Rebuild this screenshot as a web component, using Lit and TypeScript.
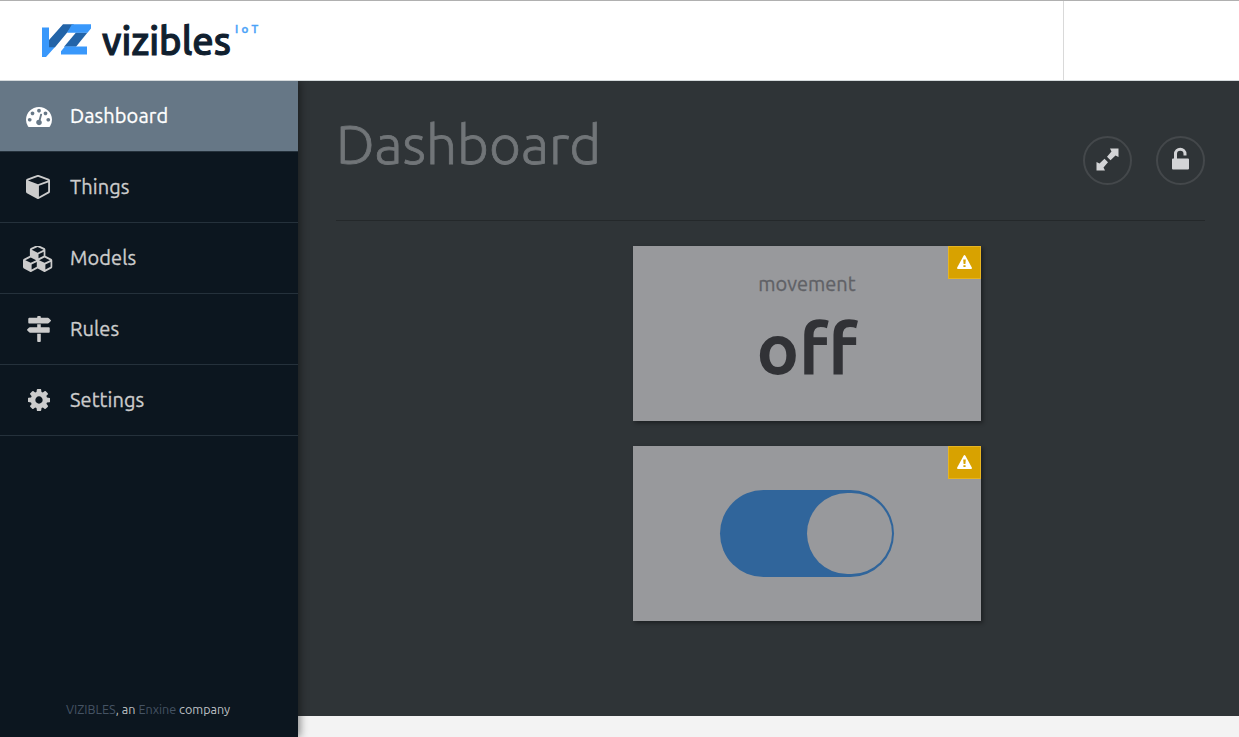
import { LitElement, html, css, svg } from "lit";
import { customElement } from "lit/decorators.js";

const gauge = "M384 1152q0-53-37.5-90.5t-90.5-37.5-90.5 37.5-37.5 90.5 37.5 90.5 90.5 37.5 90.5-37.5 37.5-90.5zm192-448q0-53-37.5-90.5t-90.5-37.5-90.5 37.5-37.5 90.5 37.5 90.5 90.5 37.5 90.5-37.5 37.5-90.5zm428 481l101-382q6-26-7.5-48.5t-38.5-29.5-48 6.5-30 39.5l-101 382q-60 5-107 43.5t-63 98.5q-20 77 20 146t117 89 146-20 89-117q16-60-6-117t-72-91zm660-33q0-53-37.5-90.5t-90.5-37.5-90.5 37.5-37.5 90.5 37.5 90.5 90.5 37.5 90.5-37.5 37.5-90.5zm-640-640q0-53-37.5-90.5t-90.5-37.5-90.5 37.5-37.5 90.5 37.5 90.5 90.5 37.5 90.5-37.5 37.5-90.5zm448 192q0-53-37.5-90.5t-90.5-37.5-90.5 37.5-37.5 90.5 37.5 90.5 90.5 37.5 90.5-37.5 37.5-90.5zm320 448q0 261-141 483-19 29-54 29h-1402q-35 0-54-29-141-221-141-483 0-182 71-348t191-286 286-191 348-71 348 71 286 191 191 286 71 348z";
const cube = "M896 1629l640-349v-636l-640 233v752zm-64-865l698-254-698-254-698 254zm832-252v768q0 35-18 65t-49 47l-704 384q-28 16-61 16t-61-16l-704-384q-31-17-49-47t-18-65v-768q0-40 23-73t61-47l704-256q22-8 44-8t44 8l704 256q38 14 61 47t23 73z";
const cubes = "M640 1632l384-192v-314l-384 164v342zm-64-454l404-173-404-173-404 173zm1088 454l384-192v-314l-384 164v342zm-64-454l404-173-404-173-404 173zm-448-293l384-165v-266l-384 164v267zm-64-379l441-189-441-189-441 189zm1088 518v416q0 36-19 67t-52 47l-448 224q-25 14-57 14t-57-14l-448-224q-4-2-7-4-2 2-7 4l-448 224q-25 14-57 14t-57-14l-448-224q-33-16-52-47t-19-67v-416q0-38 21.5-70t56.5-48l434-186v-400q0-38 21.5-70t56.5-48l448-192q23-10 50-10t50 10l448 192q35 16 56.5 48t21.5 70v400l434 186q36 16 57 48t21 70z";
const signs = "M1745 297q10 10 10 23t-10 23l-141 141q-28 28-68 28h-1344q-26 0-45-19t-19-45v-256q0-26 19-45t45-19h576v-64q0-26 19-45t45-19h128q26 0 45 19t19 45v64h512q40 0 68 28zm-977 919h256v512q0 26-19 45t-45 19h-128q-26 0-45-19t-19-45v-512zm832-448q26 0 45 19t19 45v256q0 26-19 45t-45 19h-1344q-40 0-68-28l-141-141q-10-10-10-23t10-23l141-141q28-28 68-28h512v-192h256v192h576z";
const cog = "M1152 896q0-106-75-181t-181-75-181 75-75 181 75 181 181 75 181-75 75-181zm512-109v222q0 12-8 23t-20 13l-185 28q-19 54-39 91 35 50 107 138 10 12 10 25t-9 23q-27 37-99 108t-94 71q-12 0-26-9l-138-108q-44 23-91 38-16 136-29 186-7 28-36 28h-222q-14 0-24.5-8.5t-11.5-21.5l-28-184q-49-16-90-37l-141 107q-10 9-25 9-14 0-25-11-126-114-165-168-7-10-7-23 0-12 8-23 15-21 51-66.5t54-70.5q-27-50-41-99l-183-27q-13-2-21-12.5t-8-23.5v-222q0-12 8-23t19-13l186-28q14-46 39-92-40-57-107-138-10-12-10-24 0-10 9-23 26-36 98.5-107.5t94.5-71.5q13 0 26 10l138 107q44-23 91-38 16-136 29-186 7-28 36-28h222q14 0 24.5 8.5t11.5 21.5l28 184q49 16 90 37l142-107q9-9 24-9 13 0 25 10 129 119 165 170 7 8 7 22 0 12-8 23-15 21-51 66.5t-54 70.5q26 50 41 98l183 28q13 2 21 12.5t8 23.5z";

// [label, path, viewBox, width, height, icon class]
const items: [string, string, string, number, number, string][] = [
  ["Dashboard", gauge, "0 256 1792 1408", 26, 20, "wide low"],
  ["Things", cube, "0 128 1664 1664", 24, 24, ""],
  ["Models", cubes, "0 64 2304 1728", 31, 26, "mid"],
  ["Rules", signs, "37 0 1718 1792", 24, 26, "wide"],
  ["Settings", cog, "128 128 1536 1536", 22, 22, "wide"],
];

const alertBadge = html`<span class="alert">
  <svg width="15" height="14" viewBox="0 0 15 14">
    <path fill="#fff" fill-rule="evenodd" d="M7.5 0Q8 0 8.4.7L14.8 12.6Q15.3 14 14 14H1Q-.3 14 .2 12.6L6.6.7Q7 0 7.5 0ZM6.2 4.6L6.6 9H8.4L8.8 4.6ZM6.4 10.2V12H8.6V10.2Z"/>
  </svg></span>`;

@customElement("app-root")
export class AppRoot extends LitElement {
  static styles = css`
    :host { display: block; height: 737px; overflow: hidden; font-family: Ubuntu, "Noto Sans", sans-serif; background: #f3f3f3; }
    * { box-sizing: border-box; }
    .page { display: flex; flex-direction: column; height: 737px; }
    header { height: 81px; flex: none; display: flex; background: #fff; border-top: 1px solid #b0b0b0; border-bottom: 1px solid #d5dadc; }
    .brand { flex: 1; }
    .brand svg { display: block; }
    .account { width: 176px; border-left: 1px solid #d9d9d9; }
    .body { flex: 1; display: flex; min-height: 0; overflow: hidden; }
    nav { width: 298px; flex: none; background: #0c161f; display: flex; flex-direction: column; z-index: 1; box-shadow: 2px 0 8px rgba(0,0,0,.45); position: relative; }
    .item { height: 71px; display: flex; align-items: center; color: #ccc; border-bottom: 1px solid #25313b; font-size: 20px; letter-spacing: .08px; -webkit-text-stroke: .3px currentColor; }
    .item.on { background: #667786; color: #fff; }
    .icon { width: 70px; padding-left: 6px; display: flex; justify-content: center; }
    .icon.mid { padding-left: 7px; padding-top: 1px; }
    .icon.wide { padding-left: 8px; }
    .icon.low { padding-top: 2px; }
    .icon svg { display: block; fill: currentColor; }
    .label { line-height: 28px; white-space: nowrap; }
    .foot { margin-top: auto; height: 55px; font-size: 12.6px; line-height: 18px; padding: 18px 0 0 66px; color: #bcc0c4; white-space: nowrap; }
    .foot a { color: #455363; }
    main { flex: 1; height: 635px; background: #2f3437; padding: 0 34px 0 38px; }
    .head { height: 140px; display: flex; justify-content: space-between; border-bottom: 1px solid #24282a; }
    h1 { margin: 0; padding-top: 26px; font-size: 55px; font-weight: 300; line-height: 74px; color: #717578; white-space: nowrap; -webkit-text-stroke: .8px #717578; }
    .tools { display: flex; gap: 24px; padding-top: 55px; }
    .round { width: 49px; height: 49px; border: 2px solid #44484b; border-radius: 50%; display: flex; align-items: center; justify-content: center; padding-bottom: 2px; }
    .round svg { display: block; fill: #d3d4d6; }
    .round.lock { padding-bottom: 4px; padding-right: 1px; }
    .cards { display: flex; flex-direction: column; gap: 25px; padding: 25px 0 0 297px; }
    .card { width: 348px; height: 175px; background: #98999c; box-shadow: 2px 2px 4px rgba(0,0,0,.4); position: relative; display: flex; flex-direction: column; align-items: center; }
    .alert { position: absolute; top: 0; right: 0; width: 33px; height: 33px; background: #d8a200; border: 1px solid #e6b422; display: flex; align-items: center; justify-content: center; padding-bottom: 1px; }
    .name { margin-top: 24px; font-size: 20px; line-height: 28px; color: #606166; -webkit-text-stroke: .3px #606166; }
    .value { font-size: 71px; font-weight: 700; line-height: 80px; color: #313236; margin-top: 10px; }
    .switch { margin-top: 44px; width: 174px; height: 87px; border-radius: 44px; background: #30659b; padding: 3px 2px 3px 87px; }
    .knob { width: 85px; height: 81px; border-radius: 43px; background: #98999c; }
  `;

  render() {
    return html`<div class="page">
      <header>
        <div class="brand">
          <svg width="280" height="79" viewBox="0 1 280 79">
            <path fill="#3998fb" d="M42 27.500H49V47H55L46 57H42Z"/>
            <path fill="#2364a8" d="M49 40L63 24.300H74L67 32.700L55 47.300H49Z"/>
            <path fill="#2364a8" d="M76 32.500H87.500L76 46.700H64Z"/>
            <path fill="#3998fb" d="M72 24.300H91V28.500L87.500 32.700H67ZM61 54.500V51.300L65 46.500H87V54.500Z"/>
            <text x="102" y="54.5" font-family="Ubuntu, Roboto, sans-serif" font-weight="500" font-size="40" fill="#10202f" stroke="#10202f" stroke-width="1.1" textLength="129" lengthAdjust="spacingAndGlyphs">vizibles</text>
            <text x="235" y="33" font-family="Ubuntu, sans-serif" font-size="11.5" font-weight="500" fill="#4ba3f8" stroke="#4ba3f8" stroke-width=".5" textLength="23">IoT</text>
          </svg>
        </div>
        <div class="account"></div>
      </header>
      <div class="body">
        <nav>
          ${items.map(([t, d, vb, w, h, c], i) => html`<div class="item ${i === 0 ? "on" : ""}">
            <span class="icon ${c}"><svg width=${w} height=${h} viewBox=${vb} preserveAspectRatio="none">${svg`<path d=${d}/>`}</svg></span>
            <span class="label">${t}</span></div>`)}
          <div class="foot"><a>VIZIBLES</a>, an <a>Enxine</a> company</div>
        </nav>
        <main>
          <div class="head">
            <h1>Dashboard</h1>
            <div class="tools">
              <span class="round"><svg width="23" height="23" viewBox="0 0 23 23"><path d="M14 0.500H22.500V9L19.500 7.500L14.500 12.200L11 8.700L15.500 3.500ZM9 22.500H.500V14L3.500 15.500L8.500 10.800L12 14.300L7.500 19.500Z"/></svg></span>
              <span class="round lock"><svg width="17" height="23" viewBox="0 0 17 23"><path d="M2 11.500V7A6.200 6.200 0 0 1 14.500 7V8.500H11.500V7A3.200 3.200 0 0 0 5 7V11.500H16Q17 11.500 17 12.500V21.500Q17 22.500 16 22.500H1Q0 22.500 0 21.500V12.500Q0 11.500 1 11.500Z"/></svg></span>
            </div>
          </div>
          <div class="cards">
            <div class="card">${alertBadge}<span class="name">movement</span><span class="value">off</span></div>
            <div class="card">${alertBadge}<div class="switch"><div class="knob"></div></div></div>
          </div>
        </main>
      </div>
    </div>`;
  }
}
